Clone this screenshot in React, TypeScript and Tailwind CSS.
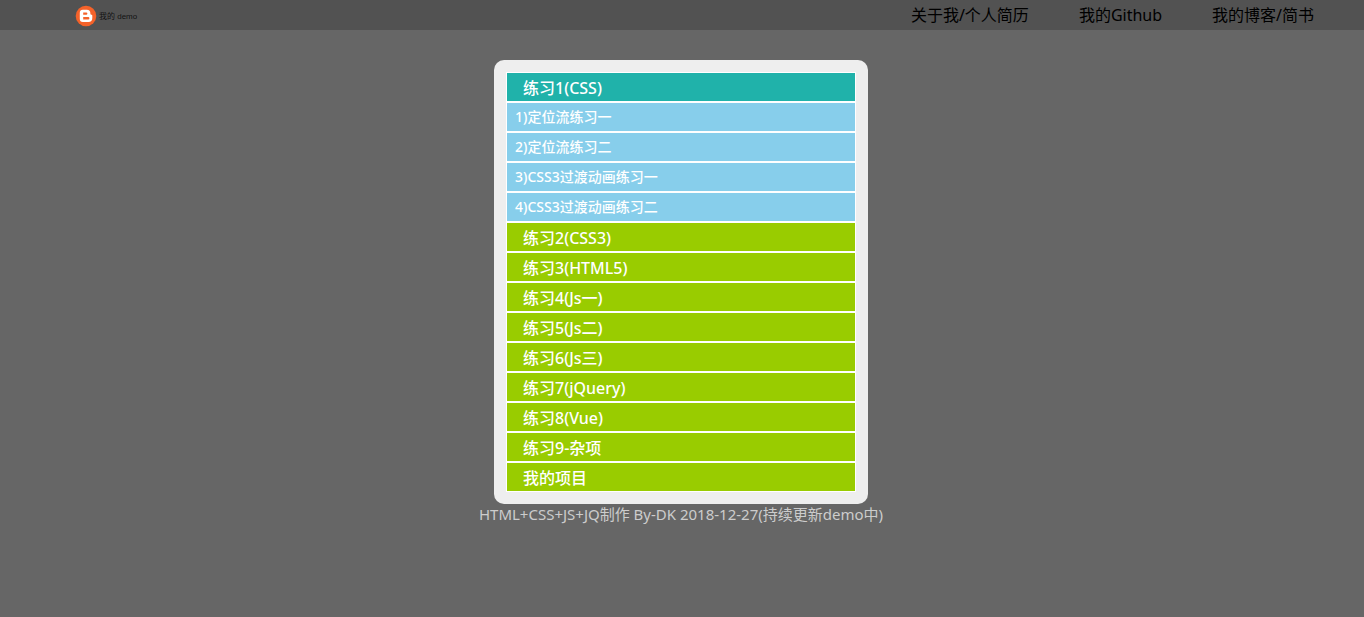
import React, { useState } from "react";

type Section = { title: string; items: string[] };

const sections: Section[] = [
  {
    title: "练习1(CSS)",
    items: ["1)定位流练习一", "2)定位流练习二", "3)CSS3过渡动画练习一", "4)CSS3过渡动画练习二"],
  },
  { title: "练习2(CSS3)", items: [] },
  { title: "练习3(HTML5)", items: [] },
  { title: "练习4(Js一)", items: [] },
  { title: "练习5(Js二)", items: [] },
  { title: "练习6(Js三)", items: [] },
  { title: "练习7(jQuery)", items: [] },
  { title: "练习8(Vue)", items: [] },
  { title: "练习9-杂项", items: [] },
  { title: "我的项目", items: [] },
];

const links = ["关于我/个人简历", "我的Github", "我的博客/简书"];

function Logo() {
  return (
    <a href="#" className="flex items-center gap-0.5 pt-0.5 text-black/80">
      <svg viewBox="0 0 22 22" className="size-[22px]" aria-hidden="true">
        <circle cx="11" cy="11" r="10.3" fill="#f4622a" />
        <path
          fill="#fff"
          fillRule="evenodd"
          d="M7.8 4.8h4a3.6 3.6 0 0 1 3.6 3.6v.4c0 .6.4.9.9.9.7 0 1 .4 1 1v2.4a3.9 3.9 0 0 1-3.9 3.9H7.8a3 3 0 0 1-3-3V7.8a3 3 0 0 1 3-3Zm.4 2.6v2.4h3a1.2 1.2 0 0 0 0-2.4Zm0 4.6v2.4h5a1.2 1.2 0 0 0 0-2.4Z"
        />
      </svg>
      <span className="pt-0.5 font-['Liberation_Sans','Noto_Sans_CJK_SC',sans-serif] text-[8px] leading-none">
        我的 demo
      </span>
    </a>
  );
}

export default function App() {
  const [open, setOpen] = useState(0);
  return (
    <div className="min-h-screen bg-[#666] font-['Noto_Sans','Noto_Sans_CJK_SC',sans-serif]">
      <header className="flex h-[30px] items-center justify-between bg-[#525252] pr-[50px] pl-[75px]">
        <Logo />
        <nav className="flex gap-[50px] text-base leading-[30px] text-black">
          {links.map((link) => (
            <a key={link} href="#">
              {link}
            </a>
          ))}
        </nav>
      </header>
      <main className="flex flex-col items-center pt-[30px] pr-0.5">
        <ul className="w-[374px] rounded-[10px] bg-[#eee] p-3 text-white">
          {sections.map((section, index) => (
            <li key={section.title}>
              <button
                type="button"
                aria-expanded={open === index}
                onClick={() => setOpen(open === index ? -1 : index)}
                className={`block h-[30px] w-full border border-white pl-4 text-left text-base leading-[30px] font-medium ${
                  open === index ? "bg-[#20b2aa]" : "bg-[#9c0]"
                }`}
              >
                {section.title}
              </button>
              {open === index && section.items.length > 0 && (
                <ul>
                  {section.items.map((item) => (
                    <li key={item}>
                      <a
                        href="#"
                        className="block h-[30px] border border-white bg-[#87ceeb] pl-2 text-sm leading-7 font-medium"
                      >
                        {item}
                      </a>
                    </li>
                  ))}
                </ul>
              )}
            </li>
          ))}
        </ul>
        <p className="text-[15px] leading-5 text-[#ccc]">
          HTML+CSS+JS+JQ制作 By-DK 2018-12-27(持续更新demo中)
        </p>
      </main>
    </div>
  );
}
